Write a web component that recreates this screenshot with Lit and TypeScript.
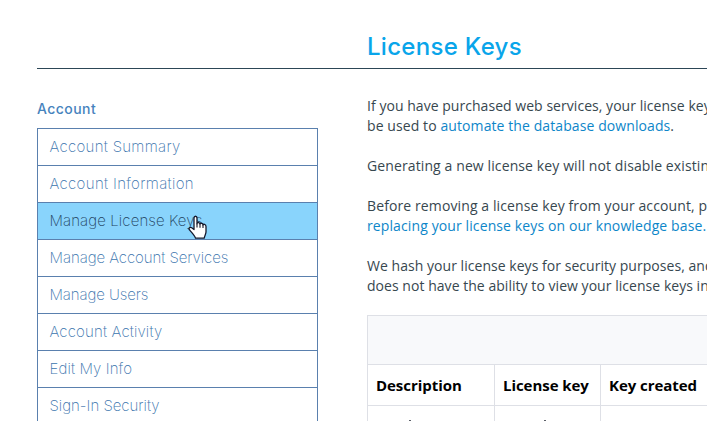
import { LitElement, html, css } from "lit";
import { customElement } from "lit/decorators.js";

interface NavItem {
  label: string;
  spacing: number;
  active?: boolean;
}

const NAV: NavItem[] = [
  { label: "Account Summary", spacing: 0.3 },
  { label: "Account Information", spacing: 0.34 },
  { label: "Manage License Keys", spacing: 0.1, active: true },
  { label: "Manage Account Services", spacing: -0.06 },
  { label: "Manage Users", spacing: -0.1 },
  { label: "Account Activity", spacing: 0.16 },
  { label: "Edit My Info", spacing: 0.12 },
  { label: "Sign-In Security", spacing: 0 },
];

@customElement("account-nav")
export class AccountNav extends LitElement {
  static styles = css`
    :host { display: block; width: 281px; flex: none; font-family: Inter, "Open Sans", sans-serif; }
    .title { margin: 0; height: 20px; line-height: 20px; font-size: 14px; font-weight: 500; letter-spacing: 0.45px; color: #4683bd; }
    .list { list-style: none; margin: 9px 0 0; padding: 0; border: 1px solid #5a80ae; }
    .item { position: relative; box-sizing: border-box; height: 37px; padding-left: 11.5px; line-height: 36px; font-size: 15px; font-weight: 200; color: #3a74ad; border-bottom: 1px solid #5a80ae; white-space: nowrap; }
    .active { background: #89d4fc; color: #1f435f; }
    .cursor { position: absolute; left: 150px; top: 12px; width: 19px; height: 25px; }
  `;
  render() {
    return html`
      <h2 class="title">Account</h2>
      <ul class="list">
        ${NAV.map(
          (n) => html`<li class="item ${n.active ? "active" : ""}">
            <span style="letter-spacing:${n.spacing}px">${n.label}</span>
            ${n.active
              ? html`<svg class="cursor" viewBox="0 0 19 25">
                  <path d="M6 14.5V3.2C6 .6 9 .6 9 3.2V8.8C9 7.1 12 7.1 12 9.2C12 7.8 15 7.8 15 10C15 8.8 18 8.9 18 11.4V17C18 18.9 16.6 20.6 16.2 23.2H7.5C7 20.8 4.3 18 1.4 14.8C.2 13.3 2.2 11.7 3.7 12.8Z" fill="#fff" stroke="#15182b" stroke-width="1.3" stroke-linejoin="round" />
                  <path d="M9 8.5v4M12 9.2v3.6M15 10v3" fill="none" stroke="#15182b" stroke-width="1.1" />
                </svg>`
              : ""}
          </li>`
        )}
      </ul>
    `;
  }
}

@customElement("app-root")
export class AppRoot extends LitElement {
  static styles = css`
    :host { display: block; box-sizing: border-box; height: 421px; overflow: hidden; padding: 27px 0 0 37px; background: #fff; color: #37474f; font-family: "Open Sans", "Noto Sans", sans-serif; }
    .head { height: 41px; border-bottom: 1px solid #2c4656; padding-left: 330px; }
    .heading { margin: 0; font: 500 24px/40px Inter, sans-serif; letter-spacing: 0.3px; color: #09a5ea; white-space: nowrap; }
    .body { display: flex; gap: 49px; padding-top: 30px; }
    .main { flex: none; width: 720px; margin-top: -3px; }
    .para { margin: 0 0 20px; font-size: 14px; line-height: 20px; white-space: nowrap; }
    .l1, .l6, .l7 { letter-spacing: 0.04px; }
    .l2 { letter-spacing: 0.09px; }
    .l3, .l4, .l5 { letter-spacing: 0.11px; }
    .link { color: #0d86c9; text-decoration: none; }
    .table { border-collapse: collapse; width: 720px; margin-top: -1px; table-layout: fixed; font-size: 15px; }
    .c1 { width: 127px; } .c2 { width: 106px; } .c3 { width: 120px; }
    .cell { border: 1px solid #dee0e6; height: 41px; box-sizing: border-box; padding: 0 8px; text-align: left; font-weight: 700; color: #000; white-space: nowrap; }
    .headcell { padding-bottom: 1px; letter-spacing: -0.05px; }
    .band { height: 49px; background: #f8f9fb; }
    .entry { height: 42px; vertical-align: top; }
    .tip { width: 2px; height: 1px; margin: 14px 0 0 33px; background: #5a5f68; }
    .tip.far { margin-left: 41px; }
  `;
  render() {
    return html`
      <header class="head"><h1 class="heading">License Keys</h1></header>
      <div class="body">
        <account-nav></account-nav>
        <main class="main">
          <p class="para"><span class="l1">If you have purchased web services, your license key</span><br /><span class="l2">be used to <a class="link">automate the database downloads</a>.</span></p>
          <p class="para"><span class="l3">Generating a new license key will not disable existin</span></p>
          <p class="para"><span class="l4">Before removing a license key from your account, p</span><br /><a class="link l5">replacing your license keys on our knowledge base.</a></p>
          <p class="para"><span class="l6">We hash your license keys for security purposes, and</span><br /><span class="l7">does not have the ability to view your license keys in</span></p>
          <table class="table">
            <colgroup><col class="c1" /><col class="c2" /><col class="c3" /><col /></colgroup>
            <tr><td class="cell band" colspan="4"></td></tr>
            <tr><th class="cell headcell">Description</th><th class="cell headcell">License key</th><th class="cell headcell">Key created</th><th class="cell"></th></tr>
            <tr><td class="cell entry"><div class="tip"></div></td><td class="cell entry"><div class="tip far"></div></td><td class="cell entry"></td><td class="cell entry"></td></tr>
          </table>
        </main>
      </div>
    `;
  }
}
